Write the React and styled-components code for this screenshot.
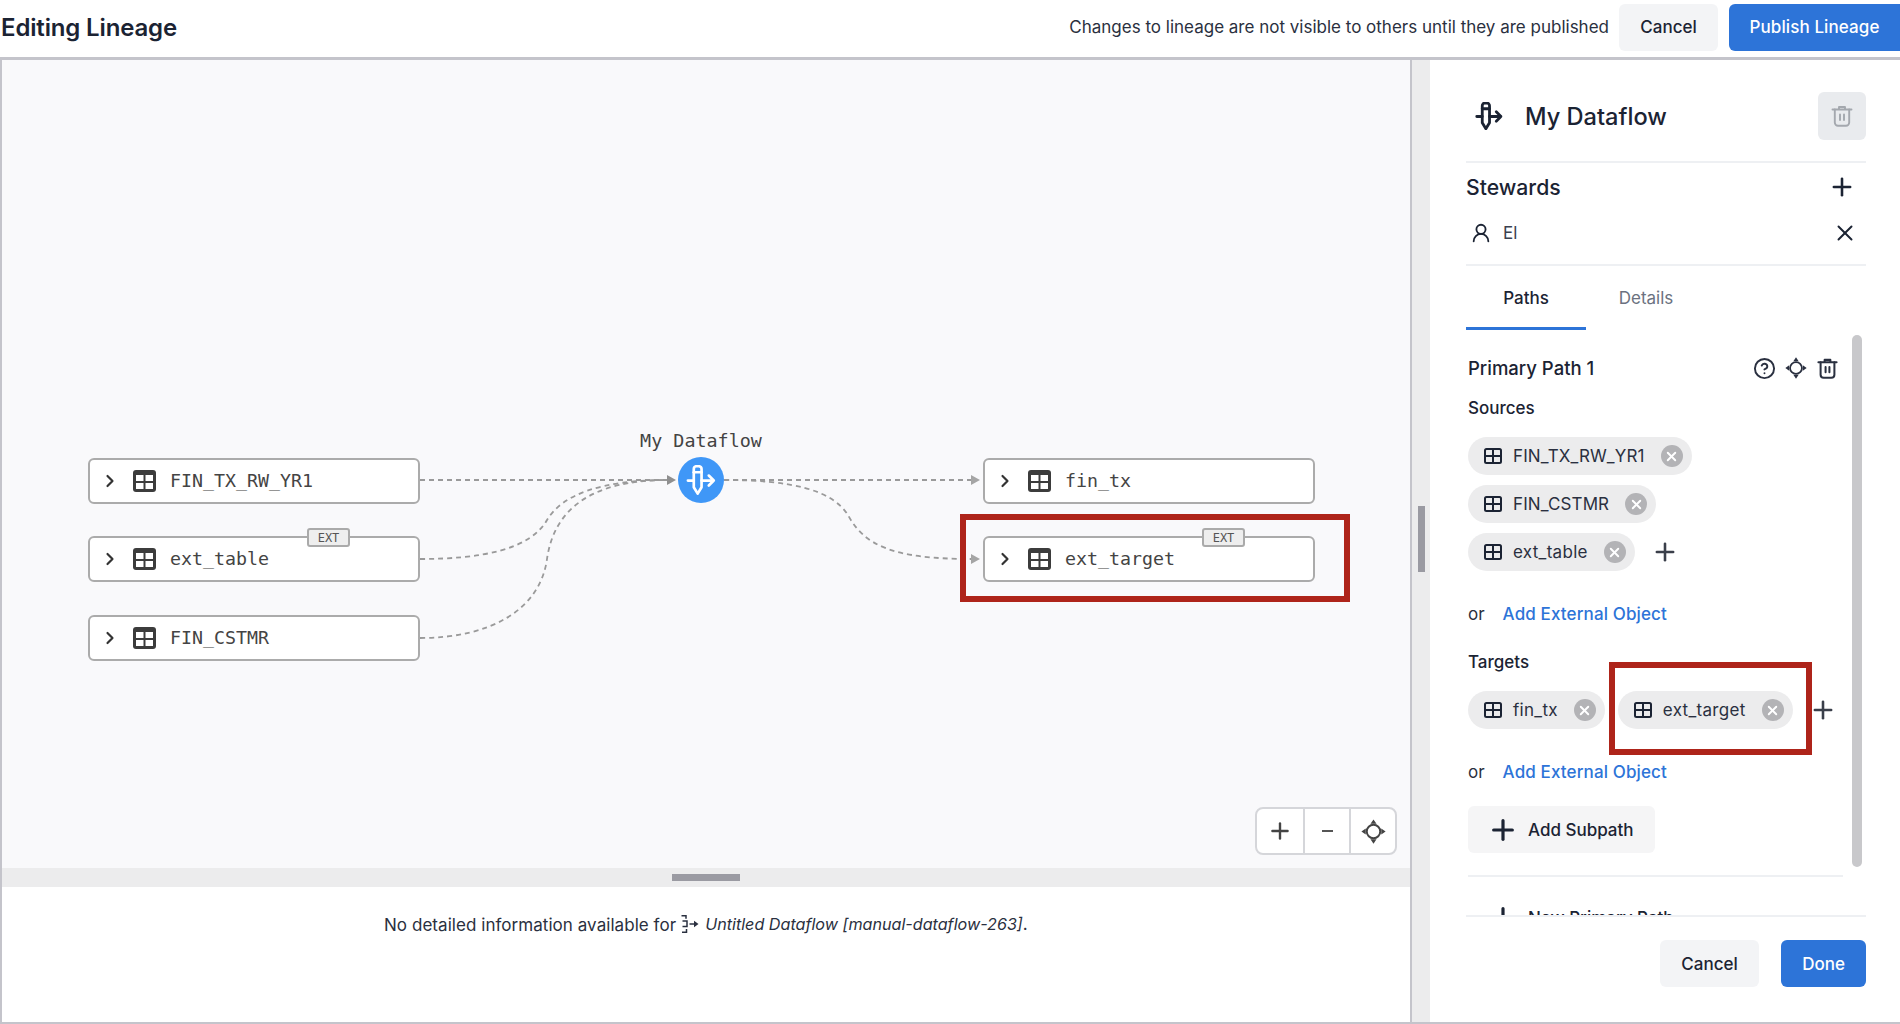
import React from "react"
import styled, { createGlobalStyle } from "styled-components"
import { ChevronRight, CircleHelp, Plus, UserRound, X } from "lucide-react"

const sans = `"Inter", "Noto Sans", sans-serif`
const mono = `"DejaVu Sans Mono", "Liberation Mono", monospace`
const ink = "#1b2333"
const blue = "#2d74d8"

const GlobalStyle = createGlobalStyle`
  html, body { margin: 0; padding: 0; background: #fff; }
  body { font-family: ${sans}; color: ${ink}; }
  * { box-sizing: border-box; }
`

const DataflowIcon = ({ size = 26, color = "currentColor", weight = 2.7 }) => (
  <svg width={size} height={size} viewBox="0 0 26 27" fill="none" stroke={color} strokeWidth={weight} strokeLinecap="round" strokeLinejoin="round">
    <path d="M6.5 3.5 a2.4 2.4 0 0 1 2.4 -2.4 h2.2 a2.4 2.4 0 0 1 2.4 2.4 v16.5 l-3.5 5.8 l-3.5 -5.8 z" />
    <path d="M6.5 6.5 h7" />
    <path d="M1.2 14 h5.3 M13.5 14 h11 M20 9.5 l4.5 4.5 l-4.5 4.5" />
  </svg>
)

const InlineFlowIcon = () => (
  <svg width="18" height="18" viewBox="0 0 18 18" fill="none" stroke="currentColor" strokeWidth="1.5">
    <path d="M0.5 0.8 h4.5 v3 M1.5 6 h4.5 v5.5 h-4.5 M5.5 14 v3.2 h-4.5" />
    <path d="M8.5 9 h6" />
    <path d="M13 5.8 l4.5 3.2 l-4.5 3.2 z" fill="currentColor" stroke="none" />
  </svg>
)

const TableIcon = ({ size = 18 }) => (
  <svg width={size} height={size} viewBox="0 0 18 18" fill="none" stroke="currentColor" strokeWidth="2">
    <rect x="1" y="2" width="16" height="14" rx="1.5" />
    <path d="M1 9 h16 M9 2 v14" />
  </svg>
)

const SolidTableIcon = () => (
  <svg width="23" height="22" viewBox="0 0 23 22">
    <rect width="23" height="22" rx="3" fill="#3c3c3c" />
    <rect x="3" y="5" width="7.5" height="6" fill="#fff" />
    <rect x="12.5" y="5" width="7.5" height="6" fill="#fff" />
    <rect x="3" y="13" width="7.5" height="6" fill="#fff" />
    <rect x="12.5" y="13" width="7.5" height="6" fill="#fff" />
  </svg>
)

const RecenterIcon = ({ size = 20 }) => (
  <svg width={size} height={size} viewBox="0 0 20 20" fill="none" stroke="currentColor" strokeWidth="1.6">
    <circle cx="10" cy="10" r="5.4" />
    <path d="M10 0.3 l2.4 3.5 h-4.8 z M10 19.7 l2.4 -3.5 h-4.8 z M0.3 10 l3.5 -2.4 v4.8 z M19.7 10 l-3.5 -2.4 v4.8 z" fill="currentColor" stroke="none" />
  </svg>
)

const TrashIcon = ({ size = 22, weight = 2.1 }) => (
  <svg width={size} height={size} viewBox="0 0 24 24" fill="none" stroke="currentColor" strokeWidth={weight} strokeLinecap="round" strokeLinejoin="round">
    <path d="M2.5 5.5 h19 M9 5.5 v-2.5 h6 v2.5" />
    <path d="M4.8 5.5 v13 a3.2 3.2 0 0 0 3.2 3.2 h8 a3.2 3.2 0 0 0 3.2 -3.2 v-13" />
    <path d="M10 10.5 v5.5 M14 10.5 v5.5" />
  </svg>
)

const CloseDot = () => (
  <CloseCircle>
    <X size={15} strokeWidth={3} color="#fff" />
  </CloseCircle>
)

const nodes = [
  { name: "FIN_TX_RW_YR1", x: 86, y: 398 },
  { name: "ext_table", x: 86, y: 476, ext: true },
  { name: "FIN_CSTMR", x: 86, y: 555 },
  { name: "fin_tx", x: 981, y: 398 },
  { name: "ext_target", x: 981, y: 476, ext: true, marked: true },
]

const edges = [
  "M418 420 L666 420",
  "M418 499 C478 499 528 490 545 460 C560 435 598 420 666 420",
  "M418 578 C488 578 538 550 545 499 C552 450 588 420 666 420",
  "M722 420 L970 420",
  "M722 420 C790 420 830 430 846 455 C862 485 890 499 970 499",
]

const Chip = ({ name, loose }) => (
  <ChipBody>
    <TableIcon />
    <ChipLabel $loose={loose}>{name}</ChipLabel>
    <CloseDot />
  </ChipBody>
)

const App = () => (
  <Page>
    <GlobalStyle />
    <Header>
      <Title>Editing Lineage</Title>
      <Notice>Changes to lineage are not visible to others until they are published</Notice>
      <GreyButton>Cancel</GreyButton>
      <PublishButton>Publish Lineage</PublishButton>
    </Header>
    <Main>
      <LeftPane>
        <Canvas>
          <Edges width="1407" height="808" viewBox="0 0 1407 808">
            {edges.map((d) => (
              <path key={d} d={d} fill="none" stroke="#9a9a9a" strokeWidth="1.8" strokeDasharray="5 4" />
            ))}
            <path d="M665 415 L674 420 L665 425 z" fill="#8f8f8f" />
            <path d="M969 415 L978 420 L969 425 z" fill="#a5a5a5" />
            <path d="M969 494 L978 499 L969 504 z" fill="#a5a5a5" />
          </Edges>
          <FlowLabel>My Dataflow</FlowLabel>
          <FlowDot>
            <DataflowIcon size={30} color="#fff" weight={2.4} />
          </FlowDot>
          {nodes.map((n) => (
            <Node key={n.name} style={{ left: n.x, top: n.y }}>
              <ChevronRight size={20} strokeWidth={2.6} color="#333" />
              <SolidTableIcon />
              <NodeName>{n.name}</NodeName>
              {n.ext && <ExtBadge>EXT</ExtBadge>}
              {n.marked && <NodeMark />}
            </Node>
          ))}
          <ZoomBar>
            <ZoomButton><Plus size={26} strokeWidth={2.2} /></ZoomButton>
            <ZoomButton><MinusBar /></ZoomButton>
            <ZoomButton><RecenterIcon size={25} /></ZoomButton>
          </ZoomBar>
        </Canvas>
        <HGutter><HHandle /></HGutter>
        <Details>
          <DetailsLine>
            <DetailsLead>No detailed information available for</DetailsLead>
            <DetailsIcon><InlineFlowIcon /></DetailsIcon>
            <DetailsName>Untitled Dataflow [manual-dataflow-263]</DetailsName>.
          </DetailsLine>
        </Details>
      </LeftPane>
      <VGutter><VHandle /></VGutter>
      <Side>
        <TitleRow>
          <TitleIcon><DataflowIcon size={28} /></TitleIcon>
          <SideTitle>My Dataflow</SideTitle>
          <TrashButton><TrashIcon size={24} weight={1.9} /></TrashButton>
        </TitleRow>
        <StewardHead>
          <StewardTitle>Stewards</StewardTitle>
          <Plus size={28} strokeWidth={2.2} />
        </StewardHead>
        <StewardItem>
          <UserRound size={22} strokeWidth={2} />
          <StewardName>El</StewardName>
          <X size={26} strokeWidth={1.8} />
        </StewardItem>
        <Tabs>
          <Tab $active>Paths</Tab>
          <Tab>Details</Tab>
        </Tabs>
        <Scroll>
          <ScrollThumb />
          <PathHead>
            <PathTitle>Primary Path 1</PathTitle>
            <PathTools>
              <CircleHelp size={23} strokeWidth={2} />
              <RecenterIcon size={22} />
              <TrashIcon size={23} />
            </PathTools>
          </PathHead>
          <GroupLabel>Sources</GroupLabel>
          <ChipRow><Chip name="FIN_TX_RW_YR1" /></ChipRow>
          <ChipRow><Chip name="FIN_CSTMR" /></ChipRow>
          <ChipRow>
            <Chip name="ext_table" loose />
            <AddChip><Plus size={28} strokeWidth={2.2} /></AddChip>
          </ChipRow>
          <OrRow>
            <span>or</span>
            <ExternalLink>Add External Object</ExternalLink>
          </OrRow>
          <GroupLabel $targets>Targets</GroupLabel>
          <ChipRow>
            <Chip name="fin_tx" loose />
            <ChipMarked>
              <Chip name="ext_target" loose />
              <ChipMark />
            </ChipMarked>
            <AddChip><Plus size={28} strokeWidth={2.2} /></AddChip>
          </ChipRow>
          <OrRow>
            <span>or</span>
            <ExternalLink>Add External Object</ExternalLink>
          </OrRow>
          <SubpathButton><Plus size={32} strokeWidth={2.4} />Add Subpath</SubpathButton>
          <ScrollDivider />
          <SubpathButton $ghost><Plus size={32} strokeWidth={2.4} />New Primary Path</SubpathButton>
        </Scroll>
        <Footer>
          <GreyButton>Cancel</GreyButton>
          <DoneButton>Done</DoneButton>
        </Footer>
      </Side>
    </Main>
  </Page>
)

export default App

const Page = styled.div`
  width: 1900px;
  height: 1024px;
  display: flex;
  flex-direction: column;
  overflow: hidden;
`

const Header = styled.header`
  height: 57px;
  flex: none;
  display: flex;
  align-items: center;
  padding-bottom: 3px;
`

const Title = styled.h1`
  margin: 0 auto 0 1px;
  font-size: 24px;
  font-weight: 600;
  letter-spacing: -0.15px;
`

const Notice = styled.span`
  font-size: 17px;
  color: #2a3040;
  margin-right: 10px;
`

const BaseButton = styled.button`
  height: 47px;
  border: 0;
  border-radius: 6px;
  font-family: ${sans};
  font-size: 17px;
  font-weight: 500;
  padding: 0;
`

const GreyButton = styled(BaseButton)`
  width: 99px;
  background: #f3f4f6;
  color: ${ink};
`

const PublishButton = styled(BaseButton)`
  width: 171px;
  margin-left: 11px;
  background: ${blue};
  color: #fff;
  letter-spacing: 0.1px;
  border-radius: 6px 0 0 6px;
`

const DoneButton = styled(BaseButton)`
  width: 85px;
  background: ${blue};
  color: #fff;
`

const Main = styled.main`
  flex: 1;
  min-height: 0;
  display: flex;
  border-top: 3px solid #c4c4cb;
  border-bottom: 2px solid #c4c4cb;
`

const LeftPane = styled.section`
  width: 1412px;
  flex: none;
  display: flex;
  flex-direction: column;
  border-left: 2px solid #c4c4cb;
  border-right: 2px solid #c4c4cb;
`

const Canvas = styled.div`
  position: relative;
  flex: 1;
  background: #f9f9fb;
`

const Edges = styled.svg`
  position: absolute;
  left: 0;
  top: 0;
`

const FlowLabel = styled.div`
  position: absolute;
  left: 638px;
  top: 370px;
  width: 122px;
  text-align: center;
  font-family: ${mono};
  font-size: 18.4px;
  color: #444;
  white-space: nowrap;
`

const FlowDot = styled.div`
  position: absolute;
  left: 676px;
  top: 397px;
  width: 46px;
  height: 46px;
  border-radius: 50%;
  background: #3f97f7;
  display: flex;
  align-items: center;
  justify-content: center;
`

const Node = styled.div`
  position: absolute;
  width: 332px;
  height: 46px;
  display: flex;
  align-items: center;
  padding-left: 10px;
  gap: 13px;
  background: #fff;
  border: 2px solid #ababab;
  border-radius: 6px;
`

const NodeName = styled.span`
  font-family: ${mono};
  font-size: 18.3px;
  color: #444;
  margin: -2px 0 0 1px;
`

const ExtBadge = styled.span`
  position: absolute;
  right: 68px;
  top: -10px;
  width: 43px;
  height: 19px;
  display: flex;
  align-items: center;
  justify-content: center;
  font-family: ${mono};
  font-size: 12px;
  color: #555;
  background: #eee;
  border: 2px solid #aaa;
  border-radius: 3px;
`

const NodeMark = styled.div`
  position: absolute;
  left: -25px;
  right: -37px;
  top: -24px;
  bottom: -22px;
  border: 6px solid #ae241a;
  pointer-events: none;
`

const ZoomBar = styled.div`
  position: absolute;
  right: 13px;
  bottom: 13px;
  display: flex;
  height: 48px;
  background: #fff;
  border: 2px solid #d5d6da;
  border-radius: 8px;
`

const ZoomButton = styled.div`
  width: 46px;
  display: flex;
  align-items: center;
  justify-content: center;
  color: #444;
  & + & {
    border-left: 2px solid #d5d6da;
  }
`

const MinusBar = styled.span`
  width: 11px;
  height: 2px;
  background: #555;
`

const HGutter = styled.div`
  height: 19px;
  flex: none;
  background: #ececed;
  display: flex;
  justify-content: center;
  align-items: center;
`

const HHandle = styled.div`
  width: 68px;
  height: 7px;
  background: #9a9aa2;
`

const Details = styled.div`
  height: 135px;
  flex: none;
  padding: 25px 0 0 382px;
  background: #fff;
`

const DetailsLine = styled.p`
  margin: 0;
  display: flex;
  align-items: center;
  font-size: 17px;
  color: #2a3040;
  white-space: nowrap;
`

const DetailsLead = styled.span`
  margin-top: 3px;
  letter-spacing: 0.05px;
`

const DetailsName = styled.em`
  font-size: 16.15px;
  font-style: italic;
`

const DetailsIcon = styled.span`
  display: inline-flex;
  margin: 0 6px 0 5px;
`

const VGutter = styled.div`
  width: 18px;
  flex: none;
  background: #ececed;
  display: flex;
  align-items: flex-start;
  justify-content: center;
  padding-top: 446px;
`

const VHandle = styled.div`
  width: 7px;
  height: 66px;
  background: #9a9aa2;
`

const Side = styled.aside`
  flex: 1;
  min-width: 0;
  display: flex;
  flex-direction: column;
  padding: 0 34px 0 36px;
`

const TitleRow = styled.div`
  height: 103px;
  flex: none;
  padding-top: 10px;
  display: flex;
  align-items: center;
  border-bottom: 2px solid #eef0f3;
`

const TitleIcon = styled.span`
  display: inline-flex;
  margin-left: 9px;
  margin-right: 22px;
`

const SideTitle = styled.h2`
  margin: 2px auto 0 0;
  font-size: 23.6px;
  font-weight: 500;
`

const TrashButton = styled.div`
  width: 48px;
  height: 48px;
  border-radius: 6px;
  background: #e9ebee;
  color: #a4a8ae;
  display: flex;
  align-items: center;
  justify-content: center;
`

const StewardHead = styled.div`
  height: 48px;
  flex: none;
  display: flex;
  align-items: center;
  justify-content: space-between;
  padding-right: 10px;
`

const StewardTitle = styled.h3`
  margin: 0;
  font-size: 21.2px;
  font-weight: 500;
`

const StewardItem = styled.div`
  height: 55px;
  flex: none;
  display: flex;
  align-items: center;
  padding: 0 8px 10px 4px;
  border-bottom: 2px solid #eef0f3;
`

const StewardName = styled.span`
  margin: 0 auto 0 11px;
  font-size: 17px;
  color: #3a4150;
`

const Tabs = styled.div`
  height: 64px;
  flex: none;
  display: flex;
`

const Tab = styled.div`
  width: 120px;
  display: flex;
  align-items: center;
  justify-content: center;
  padding-top: 2px;
  font-size: 17px;
  font-weight: ${(p) => (p.$active ? 500 : 400)};
  color: ${(p) => (p.$active ? ink : "#6b7280")};
  border-bottom: 3px solid ${(p) => (p.$active ? blue : "transparent")};
`

const Scroll = styled.div`
  position: relative;
  flex: 1;
  min-height: 0;
  overflow: hidden;
  padding: 26px 0 0 2px;
  border-bottom: 2px solid #eef0f3;
`

const ScrollThumb = styled.div`
  position: absolute;
  right: 4px;
  top: 5px;
  width: 10px;
  height: 532px;
  border-radius: 5px;
  background: #c8c8cb;
`

const PathHead = styled.div`
  display: flex;
  align-items: center;
  justify-content: space-between;
  width: 371px;
  height: 24px;
`

const PathTitle = styled.div`
  font-size: 18.5px;
  font-weight: 500;
`

const PathTools = styled.div`
  display: flex;
  align-items: center;
  gap: 9px;
  color: #2a3040;
`

const GroupLabel = styled.div`
  font-size: 17px;
  font-weight: 500;
  margin-top: ${(p) => (p.$targets ? 26 : 18)}px;
  margin-bottom: 18px;
  line-height: 21px;
`

const ChipRow = styled.div`
  display: flex;
  align-items: center;
  margin-bottom: 10px;
  gap: 13px;
`

const ChipBody = styled.div`
  height: 38px;
  display: inline-flex;
  align-items: center;
  padding: 0 9px 0 16px;
  border-radius: 19px;
  background: #ececed;
  color: ${ink};
`

const ChipLabel = styled.span`
  margin: 0 16px 0 11px;
  font-size: 17px;
  letter-spacing: ${(p) => (p.$loose ? 0.3 : 0.12)}px;
  color: #2a3040;
`

const CloseCircle = styled.span`
  width: 22px;
  height: 22px;
  border-radius: 50%;
  background: #b3b3b6;
  display: flex;
  align-items: center;
  justify-content: center;
`

const AddChip = styled.span`
  display: inline-flex;
  margin-left: 3px;
  color: #3a3f4a;
`

const ChipMarked = styled.span`
  position: relative;
  display: inline-flex;
`

const ChipMark = styled.span`
  position: absolute;
  left: -9px;
  right: -19px;
  top: -29px;
  bottom: -26px;
  border: 6px solid #ae241a;
  pointer-events: none;
`

const OrRow = styled.div`
  display: flex;
  align-items: center;
  gap: 18px;
  font-size: 17px;
  color: #2a3040;
  margin-top: 31px;
  height: 24px;
`

const ExternalLink = styled.a`
  color: ${blue};
  font-weight: 500;
  letter-spacing: 0.12px;
`

const SubpathButton = styled.div`
  width: ${(p) => (p.$ghost ? "auto" : "187px")};
  height: 47px;
  margin-top: ${(p) => (p.$ghost ? 17 : 22)}px;
  display: flex;
  align-items: center;
  gap: 9px;
  padding-left: 19px;
  border-radius: 6px;
  background: ${(p) => (p.$ghost ? "transparent" : "#f5f5f6")};
  font-size: 17px;
  font-weight: 500;
`

const ScrollDivider = styled.div`
  width: 375px;
  height: 2px;
  margin-top: 22px;
  background: #eef0f3;
`

const Footer = styled.div`
  height: 105px;
  flex: none;
  display: flex;
  justify-content: flex-end;
  gap: 22px;
  padding-top: 23px;
`
